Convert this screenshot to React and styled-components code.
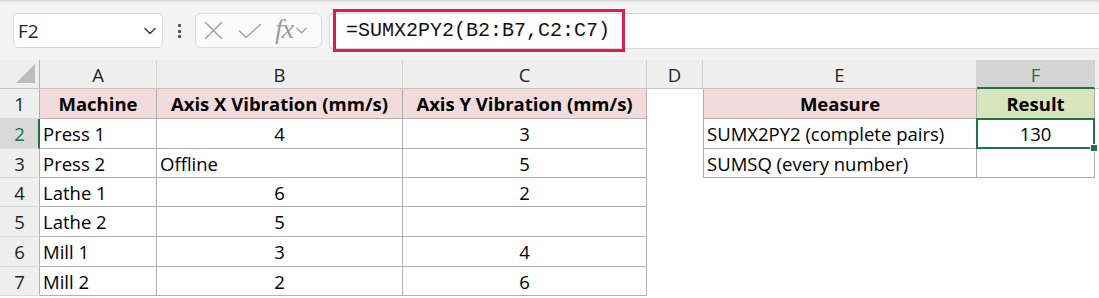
import React from "react";
import styled, { createGlobalStyle } from "styled-components";

const GlobalStyle = createGlobalStyle`
  html, body {
    margin: 0;
    padding: 0;
    background: #ffffff;
  }
  body {
    width: 1099px;
    height: 298px;
    overflow: hidden;
    font-family: "Open Sans", Lato, sans-serif;
  }
`;

const Window = styled.div`
  width: 1099px;
  height: 298px;
  display: flex;
  flex-direction: column;
  background: #ffffff;
  overflow: hidden;
`;

const Toolbar = styled.div`
  height: 60px;
  flex: none;
  display: flex;
  align-items: flex-start;
  box-sizing: border-box;
  padding: 13px 0 0 13px;
  background: linear-gradient(#d6d6d6 0, #e9e9e9 2px, #f3f3f3 4px);
`;

const NameBox = styled.div`
  width: 150px;
  height: 35px;
  box-sizing: border-box;
  display: flex;
  align-items: center;
  justify-content: space-between;
  padding: 0 5px 0 4px;
  background: #ffffff;
  border: 1px solid #d8d8d8;
  border-radius: 5px;
  font-size: 19px;
  color: #1f1f1f;
`;

const Grip = styled.div`
  display: flex;
  flex-direction: column;
  gap: 2.5px;
  margin: 11px 14px 0 15px;
`;

const GripDot = styled.span`
  width: 3px;
  height: 3px;
  border-radius: 1px;
  background: #5b4b44;
`;

const FxBox = styled.div`
  width: 127px;
  height: 35px;
  box-sizing: border-box;
  display: flex;
  align-items: center;
  padding: 0 0 0 8px;
  background: #fbfbfb;
  border: 1px solid #dcdcdc;
  border-radius: 6px;
  color: #a3a3a3;
`;

const FxLabel = styled.span`
  font-family: "Liberation Serif", serif;
  font-style: italic;
  font-size: 28px;
  line-height: 1;
  margin: -4px 2px 0 13px;
  color: #9c9c9c;
  letter-spacing: -1px;
`;

const FormulaBar = styled.div`
  flex: 1;
  height: 36px;
  margin-left: 7px;
  box-sizing: border-box;
  display: flex;
  align-items: stretch;
  background: #ffffff;
  border: 1px solid #d8d8d8;
  border-right: none;
  border-radius: 4px 0 0 4px;
`;

const Highlight = styled.div`
  width: 292px;
  box-sizing: border-box;
  margin: -5px 0 -4px 3px;
  padding-left: 10px;
  display: flex;
  align-items: center;
  border: 3px solid #dc1f4a;
  font-family: "Liberation Mono", monospace;
  font-size: 20px;
  color: #111111;
`;

const Sheet = styled.div`
  flex: none;
  display: grid;
  grid-template-columns: 40px 117px 246px 244px 56px 274px 118px 1fr;
  grid-template-rows: 29px 30px 30px 29px 29px 30px 30px 29px;
  font-size: 18.5px;
`;

const Corner = styled.div`
  position: relative;
  background: #efefef;
  border-right: 1px solid #b4b4b4;
  border-bottom: 1px solid #c4c4c4;
  &::after {
    content: "";
    position: absolute;
    right: 4px;
    bottom: 5px;
    width: 19px;
    height: 19px;
    background: #bdbdbd;
    clip-path: polygon(100% 0, 100% 100%, 0 100%);
  }
`;

const ColHead = styled.div`
  display: flex;
  align-items: center;
  justify-content: center;
  box-sizing: border-box;
  background: ${p => (p.$active ? "#d4d4d4" : "#efefef")};
  color: ${p => (p.$active ? "#217346" : "#1f1f1f")};
  border-right: 1px solid #d3d3d3;
  border-bottom: ${p => (p.$active ? "2px solid #217346" : "1px solid #c4c4c4")};
  padding-top: ${p => (p.$active ? "1px" : "0")};
`;

const RowHead = styled.div`
  display: flex;
  align-items: center;
  justify-content: center;
  box-sizing: border-box;
  background: ${p => (p.$active ? "#d9d9d9" : "#efefef")};
  color: ${p => (p.$active ? "#217346" : "#1f1f1f")};
  border-right: ${p => (p.$active ? "2px solid #217346" : "1px solid #b4b4b4")};
  border-bottom: 1px solid #dadada;
  padding-left: ${p => (p.$active ? "1px" : "0")};
`;

const Cell = styled.div`
  position: relative;
  display: flex;
  align-items: center;
  justify-content: ${p => (p.$align === "center" ? "center" : "flex-start")};
  box-sizing: border-box;
  padding: 0 3px;
  white-space: nowrap;
  background: ${p => p.$fill || "#ffffff"};
  font-weight: ${p => (p.$bold ? 700 : 400)};
  color: #000000;
  border-right: ${p => (p.$boxed ? "1px solid #b0b0b0" : "none")};
  border-bottom: ${p => (p.$boxed ? "1px solid #b0b0b0" : "none")};
  border-left: ${p => (p.$left ? "1px solid #b0b0b0" : "none")};

  ${p =>
    p.$selected &&
    `
    &::before {
      content: "";
      position: absolute;
      top: -1px;
      left: -1px;
      right: -1px;
      bottom: -1px;
      border: 2px solid #217346;
      z-index: 1;
    }
    &::after {
      content: "";
      position: absolute;
      right: -4px;
      bottom: -4px;
      width: 6px;
      height: 6px;
      background: #217346;
      border: 1px solid #ffffff;
      z-index: 2;
    }
  `}
`;

const PINK = "#f2dcdb";
const GREEN = "#d8e4bc";

const columns = ["A", "B", "C", "D", "E", "F", ""];

const machines = [
  ["Press 1", "4", "3"],
  ["Press 2", "Offline", "5"],
  ["Lathe 1", "6", "2"],
  ["Lathe 2", "5", ""],
  ["Mill 1", "3", "4"],
  ["Mill 2", "2", "6"],
];

const measures = [
  ["SUMX2PY2 (complete pairs)", "130"],
  ["SUMSQ (every number)", ""],
];

const Chevron = ({ size = 14, color = "#3c3c3c" }) => (
  <svg width={size} height={size} viewBox="0 0 14 14" fill="none">
    <path d="M2 4.5 L7 9.5 L12 4.5" stroke={color} strokeWidth="1.5" strokeLinecap="round" strokeLinejoin="round" />
  </svg>
);

const CancelIcon = () => (
  <svg width="19" height="19" viewBox="0 0 19 19" fill="none">
    <path d="M1.5 1.5 L17.5 17.5 M17.5 1.5 L1.5 17.5" stroke="#a3a3a3" strokeWidth="1.5" strokeLinecap="round" />
  </svg>
);

const CheckIcon = () => (
  <svg width="24" height="16" viewBox="0 0 24 16" fill="none" style={{ marginLeft: 15 }}>
    <path d="M1.5 8 L8 14.5 L22.5 1.5" stroke="#a3a3a3" strokeWidth="1.5" strokeLinecap="round" strokeLinejoin="round" />
  </svg>
);

const App = () => {
  return (
    <Window>
      <GlobalStyle />
      <Toolbar>
        <NameBox>
          <span>F2</span>
          <Chevron />
        </NameBox>
        <Grip>
          <GripDot />
          <GripDot />
          <GripDot />
        </Grip>
        <FxBox>
          <CancelIcon />
          <CheckIcon />
          <FxLabel>fx</FxLabel>
          <Chevron size={13} color="#a3a3a3" />
        </FxBox>
        <FormulaBar>
          <Highlight>=SUMX2PY2(B2:B7,C2:C7)</Highlight>
        </FormulaBar>
      </Toolbar>

      <Sheet>
        <Corner />
        {columns.map((c, i) => (
          <ColHead key={i} $active={c === "F"}>{c}</ColHead>
        ))}

        <RowHead>1</RowHead>
        <Cell $boxed $bold $fill={PINK} $align="center">Machine</Cell>
        <Cell $boxed $bold $fill={PINK} $align="center">Axis X Vibration (mm/s)</Cell>
        <Cell $boxed $bold $fill={PINK} $align="center">Axis Y Vibration (mm/s)</Cell>
        <Cell />
        <Cell $boxed $left $bold $fill={PINK} $align="center">Measure</Cell>
        <Cell $boxed $bold $fill={GREEN} $align="center">Result</Cell>
        <Cell />

        {machines.map(([name, x, y], i) => {
          const measure = measures[i];
          return (
            <React.Fragment key={name}>
              <RowHead $active={i === 0}>{i + 2}</RowHead>
              <Cell $boxed>{name}</Cell>
              <Cell $boxed $align={x === "Offline" ? "left" : "center"}>{x}</Cell>
              <Cell $boxed $align="center">{y}</Cell>
              <Cell />
              {measure ? (
                <>
                  <Cell $boxed $left>{measure[0]}</Cell>
                  <Cell $boxed $align="center" $selected={i === 0}>{measure[1]}</Cell>
                </>
              ) : (
                <>
                  <Cell />
                  <Cell />
                </>
              )}
              <Cell />
            </React.Fragment>
          );
        })}
      </Sheet>
    </Window>
  );
};

export default App;
